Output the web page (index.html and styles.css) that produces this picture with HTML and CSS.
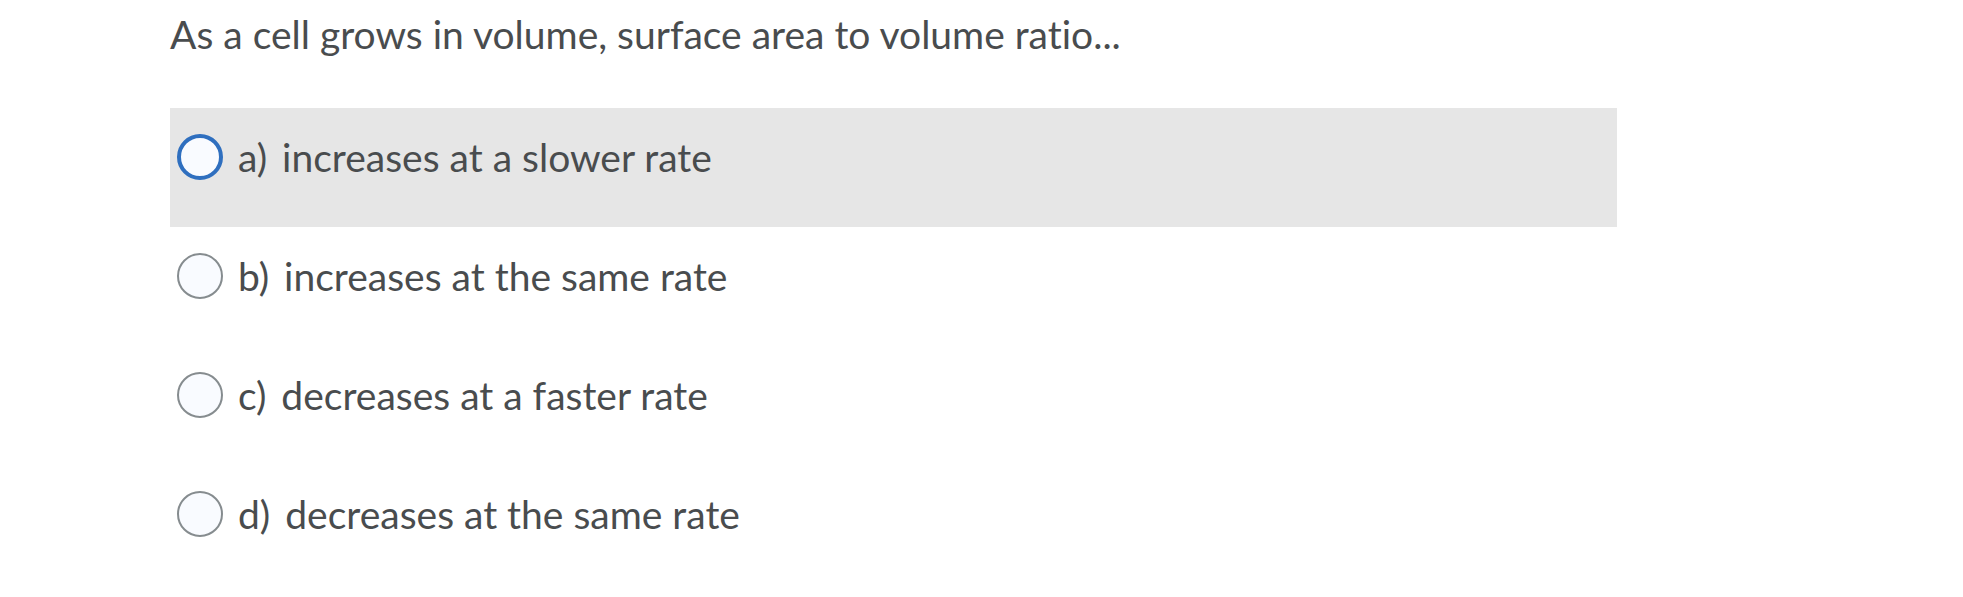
FILE: index.html
```html
<!DOCTYPE html>
<html>
<head>
<meta charset="utf-8">
<link rel="stylesheet" href="styles.css">
</head>
<body>
<div class="question">
  <div class="prompt">As a cell grows in volume, surface area to volume ratio...</div>
  <div class="options">
    <label class="option selected"><span class="radio"></span><span class="text"><span class="letter">a)</span> increases at a slower rate</span></label>
    <label class="option"><span class="radio"></span><span class="text"><span class="letter">b)</span> increases at the same rate</span></label>
    <label class="option"><span class="radio"></span><span class="text"><span class="letter">c)</span> decreases at a faster rate</span></label>
    <label class="option"><span class="radio"></span><span class="text"><span class="letter">d)</span> decreases at the same rate</span></label>
  </div>
</div>
</body>
</html>
```
FILE: styles.css
```css
html, body {
  margin: 0;
  padding: 0;
  background: #ffffff;
}
body {
  font-family: Lato, "Open Sans", sans-serif;
  color: #494c4e;
  font-variant-ligatures: none;
  font-feature-settings: "liga" 0, "clig" 0;
}
.question {
  padding-left: 170px;
  width: 1447px;
}
.prompt {
  font-size: 39px;
  line-height: 54px;
  margin-top: 7px;
  height: 54px;
  margin-bottom: 47px;
}
.options {
  display: flex;
  flex-direction: column;
}
.option {
  display: flex;
  box-sizing: border-box;
  height: 119px;
  padding-top: 26px;
  padding-left: 7px;
  align-items: flex-start;
}
.option.selected {
  background: #e6e6e6;
}
.radio {
  box-sizing: border-box;
  width: 46px;
  height: 46px;
  border-radius: 50%;
  border: 2px solid #868c8f;
  background: #f9fbff;
  flex: none;
}
.option.selected .radio {
  border: 4px solid #2f6fbf;
}
.text {
  margin-left: 15px;
  font-size: 39px;
  line-height: 46px;
}
.letter {
  margin-right: 5px;
}
```
